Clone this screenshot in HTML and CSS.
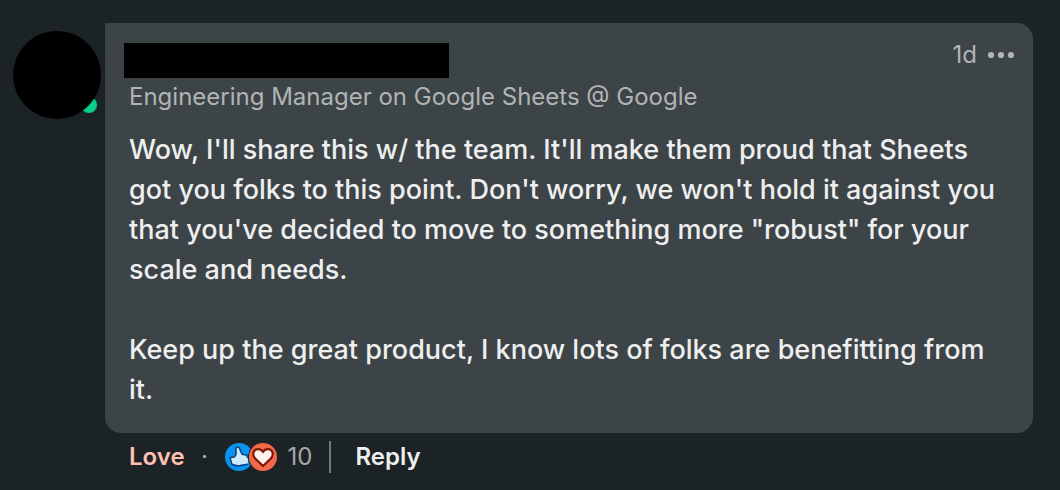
FILE: index.html
```html
<!DOCTYPE html>
<html lang="en">
<head>
    <meta charset="UTF-8">
    <meta name="viewport" content="width=device-width, initial-scale=1.0">
    <title>Comment</title>
    <link rel="stylesheet" href="styles.css">
</head>
<body>
    <article class="comment">
        <div class="avatar">
            <span class="status"></span>
            <span class="photo"></span>
        </div>

        <div class="main">
            <div class="bubble">
                <header class="head">
                    <div class="name"></div>
                    <div class="meta">
                        <time>1d</time>
                        <button class="more" type="button" aria-label="More options">
                            <svg width="28" height="8" viewBox="0 0 28 8" fill="currentColor">
                                <circle cx="4" cy="4" r="3.1"/>
                                <circle cx="14" cy="4" r="3.1"/>
                                <circle cx="24" cy="4" r="3.1"/>
                            </svg>
                        </button>
                    </div>
                </header>
                <p class="title">Engineering Manager on Google Sheets @ Google</p>
                <div class="text">
                    <p>Wow, I'll share this w/ the team. It'll make them proud that Sheets got you folks to this point. Don't worry, we won't hold it against you that you've decided to move to something more "robust" for your scale and needs.</p>
                    <p>Keep up the great product, I know lots of folks are benefitting from it.</p>
                </div>
            </div>

            <footer class="actions">
                <button class="love" type="button">Love</button>
                <span class="dot">·</span>
                <button class="reactions" type="button" aria-label="10 reactions">
                    <svg width="52" height="28" viewBox="0 0 52 28">
                        <circle cx="14" cy="14" r="14" fill="#0a93ee"/>
                        <path d="M4.8 14.6 L9 14 C10.2 13.2 10.4 12.6 11 11.8 C11.4 9.8 10.8 7.8 11 5.8 C11.2 3.6 13.4 3.4 14.4 5.2 C15.4 7.2 15.8 9 17 11.2 L21 12 C22.4 12.4 22.6 13.4 22.4 14.4 C23.2 15.4 23.2 16.6 22.8 17.4 L23 21 L15 22.6 C12 23 10 22.4 8.4 21.4 L6.2 21.6 Z" fill="#cfeafe"/>
                        <path d="M7 21.6 L5 14.6 L9 14 C11 12.6 11.4 11.4 11 9 L10.8 6 C11.2 3.6 13.4 3.4 14.4 5.2 C15.4 7.2 15.8 9 17 11.2 L21 12 C22.4 12.4 22.6 13.4 22.4 14.4 M7 21.2 C10 22.8 12 23 15 22.6 L22.6 21.2" fill="none" stroke="#08457e" stroke-width="1.6" stroke-linecap="round" stroke-linejoin="round"/>
                        <circle cx="38" cy="14" r="15" fill="#1b2326"/>
                        <circle cx="38" cy="14" r="14" fill="#f5694b"/>
                        <path d="M38 23 L30.2 15.6 C26.4 11.4 28.6 6.2 33 6.2 C35.4 6.2 37 7.4 38 9 C39 7.4 40.6 6.2 43 6.2 C47.4 6.2 49.6 11.4 45.8 15.6 Z" fill="#fff1ed" stroke="#821904" stroke-width="2.2" stroke-linejoin="round"/>
                    </svg>
                    <span>10</span>
                </button>
                <button class="reply" type="button">Reply</button>
            </footer>
        </div>
    </article>
</body>
</html>
```
FILE: styles.css
```css
* {
    box-sizing: border-box;
}
body {
    margin: 0;
    background-color: #1b2326;
    color: #eeeeee;
    font-family: Inter, "Liberation Sans", sans-serif;
    font-size: 27px;
    line-height: 40px;
}
p {
    margin: 0;
}
button {
    padding: 0;
    border: 0;
    background: none;
    color: inherit;
    font: inherit;
    cursor: pointer;
}
svg {
    display: block;
}
.comment {
    display: flex;
    gap: 4px;
    padding: 23px 27px 0 13px;
}
.avatar {
    position: relative;
    flex: none;
    width: 88px;
    height: 88px;
    margin-top: 8px;
}
.photo {
    position: absolute;
    inset: 0;
    border-radius: 50%;
    background-color: #000;
}
.status {
    position: absolute;
    right: 4px;
    bottom: 6px;
    width: 16px;
    height: 16px;
    border-radius: 50%;
    background-color: #06cf8c;
}
.main {
    flex: 1;
    min-width: 0;
}
.bubble {
    padding: 20px 18px 23px 24px;
    border-radius: 0 16px 16px 16px;
    background-color: #3c4447;
}
.head {
    display: flex;
    justify-content: space-between;
}
.name {
    width: 325px;
    height: 35px;
    margin-left: -5px;
    background-color: #000;
}
.meta {
    display: flex;
    align-items: center;
    gap: 10px;
    height: 24px;
    color: #b1b4b5;
    font-size: 24px;
}
.title {
    color: #b1b4b5;
    font-size: 24px;
    line-height: 38px;
}
.text {
    padding: 14px 16px 0 0;
    font-weight: 500;
}
.text p + p {
    margin-top: 40px;
}
.actions {
    display: flex;
    align-items: center;
    height: 48px;
    padding-left: 24px;
    font-size: 24px;
}
.love {
    color: #ffc0b0;
    font-weight: 600;
}
.dot {
    width: 40px;
    color: #b1b4b5;
    text-align: center;
}
.reactions {
    display: flex;
    align-items: center;
    gap: 11px;
    color: #a4a8a9;
}
.reply {
    margin-left: 17px;
    padding-left: 24px;
    border-left: 2px solid #73797b;
    font-weight: 600;
    line-height: 32px;
}
```
